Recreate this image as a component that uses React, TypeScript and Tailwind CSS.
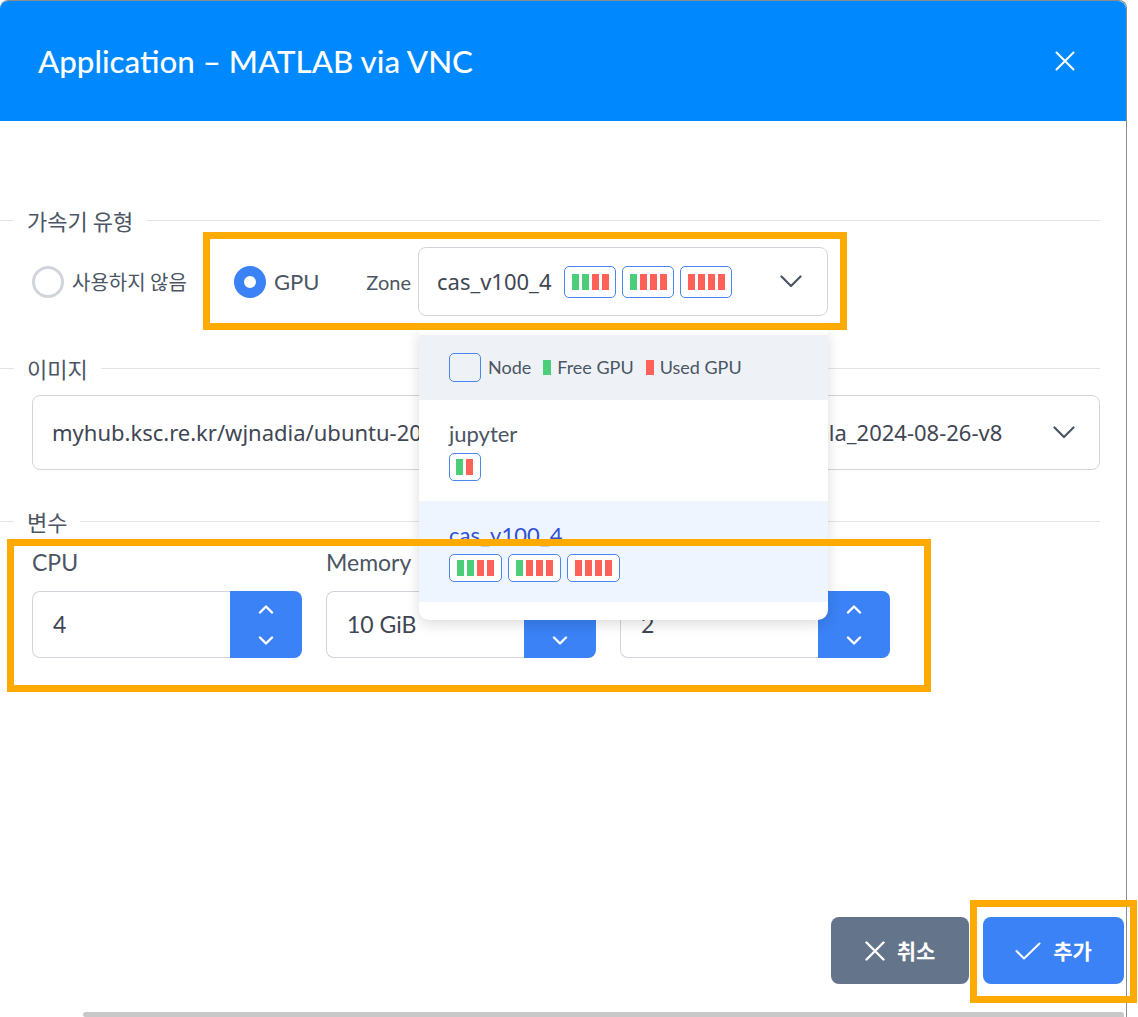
import React from "react";

const geo = "font-['Lato','Noto_Sans_CJK_KR',sans-serif]";
const noto = "font-['Noto_Sans','Noto_Sans_CJK_KR',sans-serif]";
const kr = "font-['Noto_Sans_CJK_KR',sans-serif]";

const zoneBars: number[][] = [
  [1, 1, 0, 0],
  [1, 0, 0, 0],
  [0, 0, 0, 0],
];

function ChevronDown({ className }: { className?: string }) {
  return (
    <svg width="22" height="13" viewBox="0 0 22 13" fill="none" className={className}>
      <polyline points="1.5,1.5 11,11 20.5,1.5" stroke="currentColor" strokeWidth="2.2" strokeLinecap="round" strokeLinejoin="round" />
    </svg>
  );
}

function SpinArrow({ up }: { up?: boolean }) {
  return (
    <svg width="16" height="9" viewBox="0 0 16 9" fill="none">
      <polyline
        points={up ? "2,7.5 8,1.5 14,7.5" : "2,1.5 8,7.5 14,1.5"}
        stroke="white"
        strokeWidth="2.4"
        strokeLinecap="round"
        strokeLinejoin="round"
      />
    </svg>
  );
}

function GpuBadge({ bars, small }: { bars: number[]; small?: boolean }) {
  const width = bars.length === 2 ? "w-[32px]" : small ? "w-[53px]" : "w-[52px]";
  return (
    <span
      className={`inline-flex items-center justify-center gap-[3px] rounded-[5px] border-[1.5px] border-[#4a86f0] bg-white ${width} ${
        small ? "h-[28px]" : "h-[32px]"
      }`}
    >
      {bars.map((b, i) => (
        <span key={i} className={`h-[16px] w-[7px] ${b ? "bg-[#4ccd7a]" : "bg-[#ff6158]"}`} />
      ))}
    </span>
  );
}

function Legend({ children }: { children: React.ReactNode }) {
  return (
    <div className="flex h-[28px] items-center">
      <div className="h-px w-[14px] bg-[#e2e4e8]" />
      <span className={`px-[13px] text-[22px] leading-none text-[#4b5563] ${kr}`}>{children}</span>
      <div className="h-px flex-1 bg-[#e2e4e8]" />
    </div>
  );
}

function Radio({ checked, label }: { checked?: boolean; label: string }) {
  return (
    <div className="flex items-center gap-[8px]">
      <span
        className={`h-[32px] w-[32px] rounded-full ${
          checked ? "border-[10px] border-[#3b82f6]" : "border-[3px] border-[#d1d5db]"
        }`}
      />
      <span className={`text-[#4b5563] ${checked ? geo + " text-[22px]" : kr + " text-[20px]"}`}>{label}</span>
    </div>
  );
}

function NumberField({ label, value, hideUp }: { label: string; value: string; hideUp?: boolean }) {
  return (
    <div className="w-[270px]">
      <div className={`h-[30px] text-[23px] leading-[30px] text-[#4b5563] ${geo}`}>{label}</div>
      <div className="mt-[14px] flex h-[67px]">
        <div className={`flex flex-1 items-center rounded-l-[8px] border border-r-0 border-[#d1d5db] pl-[20px] text-[23px] text-[#3f4654] ${geo}`}>
          {value}
        </div>
        <div className="flex w-[72px] flex-col items-center justify-center gap-[22px] rounded-r-[8px] bg-[#3b82f6]">
          <span className={hideUp ? "opacity-0" : ""}>
            <SpinArrow up />
          </span>
          <SpinArrow />
        </div>
      </div>
    </div>
  );
}

function ZoneDropdown() {
  return (
    <div className="absolute left-px top-[calc(100%+14px)] z-20 w-[409px] rounded-b-[10px] bg-white pt-[5px] pb-[18px] shadow-[0_4px_14px_rgba(0,0,0,0.14)]">
      <div className={`flex h-[65px] items-center bg-[#eef2f7] pl-[30px] text-[18px] text-[#4b5563] ${geo}`}>
        <span className="h-[29px] w-[32px] rounded-[5px] border-[1.5px] border-[#4a86f0]" />
        <span className="ml-[7px]">Node</span>
        <span className="ml-[12px] h-[15px] w-[8px] bg-[#4ccd7a]" />
        <span className="ml-[6px]">Free GPU</span>
        <span className="ml-[12px] h-[15px] w-[8px] bg-[#ff6158]" />
        <span className="ml-[6px]">Used GPU</span>
      </div>
      <div className="flex h-[101px] flex-col justify-center gap-[6px] pl-[30px]">
        <span className={`text-[22px] leading-[26px] text-[#4b5563] ${geo}`}>jupyter</span>
        <div>
          <GpuBadge bars={[1, 0]} small />
        </div>
      </div>
      <div className="flex h-[101px] flex-col justify-center gap-[6px] bg-[#eef5fe] pl-[30px]">
        <span className={`text-[22px] leading-[26px] text-[#2f50d3] ${geo}`}>cas_v100_4</span>
        <div className="flex gap-[6px]">
          {zoneBars.map((b, i) => (
            <GpuBadge key={i} bars={b} small />
          ))}
        </div>
      </div>
    </div>
  );
}

export default function App() {
  return (
    <div className="relative h-[1017px] w-[1138px] overflow-hidden bg-white">
      <div className="flex h-full w-[1127px] flex-col rounded-t-[8px] border-r border-t border-[#8c8c8c]">
        <div className="flex h-[120px] shrink-0 items-center justify-between rounded-t-[8px] bg-[#0088ff] pl-[38px] pr-[51px]">
          <h1 className={`text-[31.3px] font-medium text-white ${geo}`}>Application – MATLAB via VNC</h1>
          <svg width="20" height="20" viewBox="0 0 20 20" fill="none">
            <path d="M1.5 1.5 L18.5 18.5 M18.5 1.5 L1.5 18.5" stroke="white" strokeWidth="2" strokeLinecap="round" />
          </svg>
        </div>

        <div className="w-[1100px] flex-1 pt-[85px]">
          <Legend>가속기 유형</Legend>
          <div className="mt-[13px] flex h-[69px] items-center pl-[32px]">
            <Radio label="사용하지 않음" />
            <div className="ml-[47px]">
              <Radio checked label="GPU" />
            </div>
            <span className={`ml-[47px] text-[20px] text-[#4b5563] ${geo}`}>Zone</span>
            <div className="relative ml-[7px]">
              <div className="flex h-[69px] w-[410px] items-center rounded-[8px] border border-[#d1d5db] pl-[18px] pr-[25px]">
                <span className={`text-[22px] text-[#3f4654] ${noto}`}>cas_v100_4</span>
                <div className="ml-[13px] flex gap-[6px]">
                  {zoneBars.map((b, i) => (
                    <GpuBadge key={i} bars={b} />
                  ))}
                </div>
                <ChevronDown className="ml-auto text-[#4b5563]" />
              </div>
              <ZoneDropdown />
            </div>
          </div>

          <div className="mt-[38px]">
            <Legend>이미지</Legend>
          </div>
          <div className="ml-[32px] mt-[13px] flex h-[75px] items-center rounded-[8px] border border-[#d1d5db] pl-[19px] pr-[24px]">
            <span className={`flex-1 overflow-hidden whitespace-nowrap text-[22px] text-[#3f4654] ${noto}`}>
              myhub.ksc.re.kr/wjnadia/ubuntu-20.04-matlab-r2024a-vnc-cuda-11-gpu-tesla_2024-08-26-v8
            </span>
            <ChevronDown className="ml-[40px] text-[#4b5563]" />
          </div>

          <div className="mt-[37px]">
            <Legend>변수</Legend>
          </div>
          <div className="ml-[32px] mt-[12px] flex gap-[24px]">
            <NumberField label="CPU" value="4" />
            <NumberField label="Memory" value="10 GiB" hideUp />
            <NumberField label="GPU" value="2" />
          </div>
        </div>

        <div className="flex justify-end gap-[14px] pb-[28px] pr-[2px]">
          <button className={`flex h-[67px] w-[138px] items-center justify-center gap-[12px] rounded-[8px] bg-[#64748b] text-[21px] font-bold text-white ${kr}`}>
            <svg width="20" height="20" viewBox="0 0 20 20" fill="none">
              <path d="M1.5 1.5 L18.5 18.5 M18.5 1.5 L1.5 18.5" stroke="white" strokeWidth="2.4" strokeLinecap="round" />
            </svg>
            취소
          </button>
          <button className={`flex h-[67px] w-[141px] items-center justify-center gap-[12px] rounded-[8px] bg-[#3b82f6] text-[21px] font-bold text-white ${kr}`}>
            <svg width="26" height="18" viewBox="0 0 26 18" fill="none">
              <polyline points="1.5,9 9,16.5 24.5,1.5" stroke="white" strokeWidth="2" strokeLinecap="round" strokeLinejoin="round" />
            </svg>
            추가
          </button>
        </div>
        <div className="ml-[83px] mr-[2px] h-[5px] rounded-l-[4px] rounded-tr-[4px] bg-[#c8c8c8]" />
      </div>

      <div className="pointer-events-none absolute left-[203px] top-[232px] z-30 h-[98px] w-[644px] border-[7px] border-[#ffaa00]" />
      <div className="pointer-events-none absolute left-[7px] top-[539px] z-30 h-[153px] w-[924px] border-[7px] border-[#ffaa00]" />
      <div className="pointer-events-none absolute left-[970px] top-[900px] z-30 h-[103px] w-[167px] border-[7px] border-[#ffaa00]" />
    </div>
  );
}
